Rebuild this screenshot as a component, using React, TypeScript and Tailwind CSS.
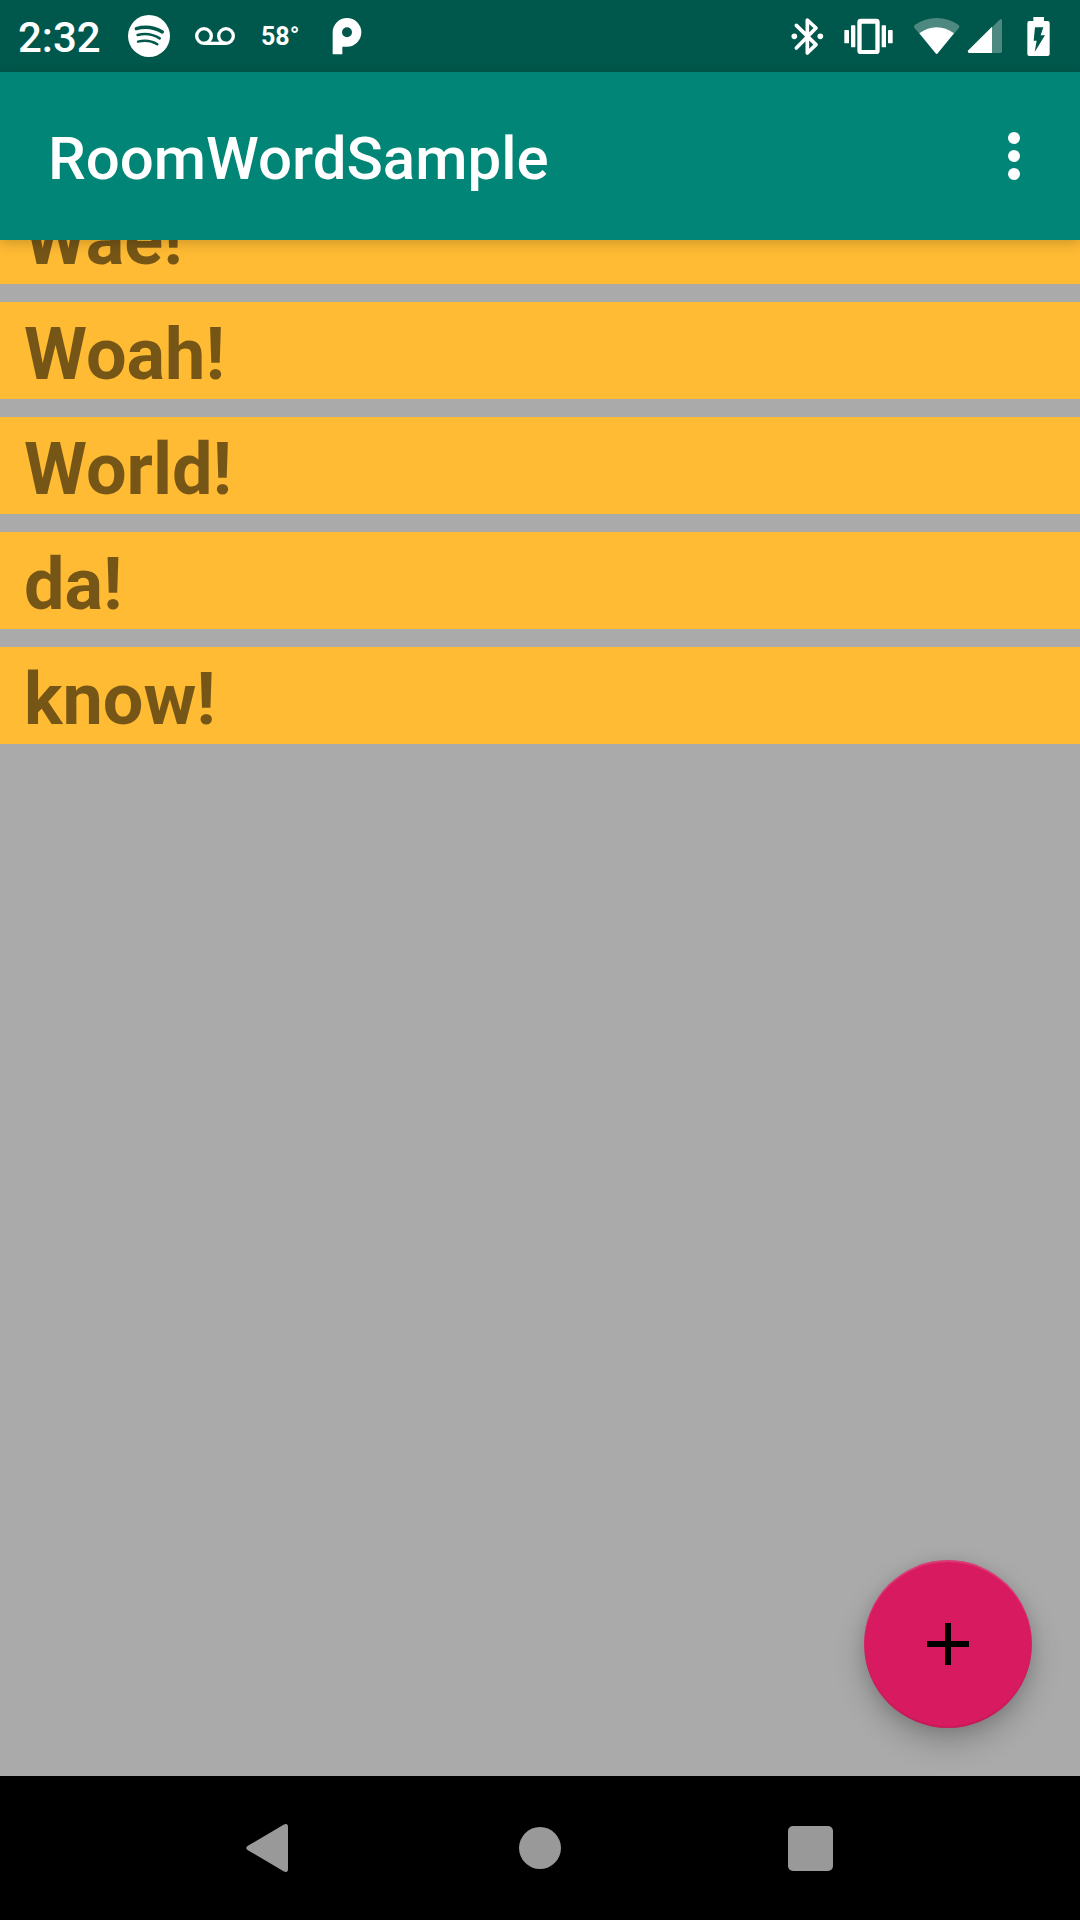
import React from "react";

const words = ["Wae!", "Woah!", "World!", "da!", "know!"];

function SpotifyIcon() {
  return (
    <svg className="size-[42px]" viewBox="0 0 126 126" fill="none" strokeLinecap="round" aria-hidden="true">
      <circle cx="63" cy="63" r="63" fill="#fff" />
      <g stroke="#00574B">
        <path d="M25 41Q66 29 103 51" strokeWidth="10" />
        <path d="M29 60Q64 51 95 70" strokeWidth="8" />
        <path d="M30 80Q62 72 88 88" strokeWidth="7" />
      </g>
    </svg>
  );
}

function VoicemailIcon() {
  return (
    <svg className="h-5 w-[42px]" viewBox="0 0 126 60" fill="none" stroke="#fff" strokeWidth="10" aria-hidden="true">
      <circle cx="30" cy="30" r="22" />
      <circle cx="96" cy="30" r="22" />
      <path d="M30 52H96" />
    </svg>
  );
}

function PodcastIcon() {
  return (
    <svg className="h-[39px] w-[30px]" viewBox="0 0 90 117" fill="#fff" fillRule="evenodd" aria-hidden="true">
      <path d="M2 112V46A43 43 0 1 1 45 89H31V112ZM30 46A15 15 0 1 0 60 46A15 15 0 1 0 30 46Z" />
    </svg>
  );
}

function BluetoothIcon() {
  return (
    <svg className="h-[39px] w-[33px]" viewBox="0 0 99 117" fill="none" aria-hidden="true">
      <circle cx="10" cy="58" r="8.5" fill="#fff" />
      <circle cx="88" cy="58" r="8.5" fill="#fff" />
      <path
        d="M16 25L75 83L49 108V9L75 33L16 93"
        stroke="#fff"
        strokeWidth="11"
        strokeLinecap="round"
        strokeLinejoin="round"
      />
    </svg>
  );
}

function VibrateIcon() {
  return (
    <svg className="h-[37px] w-[49px]" viewBox="0 0 147 111" fill="#fff" aria-hidden="true">
      <rect x="1" y="36" width="14" height="40" rx="2" />
      <rect x="21" y="22" width="13" height="66" rx="2" />
      <path
        fillRule="evenodd"
        d="M50 2H97Q107 2 107 12V98Q107 108 97 108H50Q40 108 40 98V12Q40 2 50 2ZM53 17V96H94V17Z"
      />
      <rect x="113" y="22" width="13" height="66" rx="2" />
      <rect x="132" y="36" width="14" height="40" rx="2" />
    </svg>
  );
}

function WifiIcon() {
  return (
    <svg className="h-[38px] w-[47px]" viewBox="0 0 141 114" fill="#fff" aria-hidden="true">
      <path fillOpacity="0.3" d="M68 109L4 32Q1 27 5 24Q36 3 71 3Q106 3 137 24Q141 27 138 32L74 109Q71 113 68 109Z" />
      <path d="M68 109L19 49Q43 31 71 31Q99 31 123 49L74 109Q71 113 68 109Z" />
    </svg>
  );
}

function SignalIcon() {
  return (
    <svg className="size-9" viewBox="0 0 108 108" fill="#fff" aria-hidden="true">
      <path fillOpacity="0.3" d="M75 28L98 5Q105 0 105 8V100Q105 105 100 105H75Z" />
      <path d="M75 26V105H7Q0 104 4 97Z" />
    </svg>
  );
}

function BatteryIcon() {
  return (
    <svg className="h-[39px] w-[23px]" viewBox="0 0 69 117" fill="#fff" aria-hidden="true">
      <path
        fillRule="evenodd"
        d="M19 0H51V12H62Q68 12 68 18V111Q68 117 62 117H7Q1 117 1 111V18Q1 12 7 12H19ZM24 31L20 71H29L23 105L54 55H41L49 31Z"
      />
    </svg>
  );
}

function StatusBar() {
  return (
    <header className="flex h-[72px] shrink-0 items-center justify-between bg-[#00574B] pr-[30px] pl-[18px] font-medium text-white">
      <div className="flex items-center">
        <span className="w-[110px] pt-1 text-[42px] leading-none">2:32</span>
        <SpotifyIcon />
        <span className="ml-6 flex">
          <VoicemailIcon />
        </span>
        <span className="ml-[25px] w-[71px] text-[25px] leading-none font-bold">58°</span>
        <PodcastIcon />
      </div>
      <div className="flex items-center">
        <BluetoothIcon />
        <span className="ml-5 flex">
          <VibrateIcon />
        </span>
        <span className="ml-5 flex">
          <WifiIcon />
        </span>
        <span className="ml-[7px] flex">
          <SignalIcon />
        </span>
        <span className="ml-6 flex">
          <BatteryIcon />
        </span>
      </div>
    </header>
  );
}

function AppBar() {
  return (
    <div className="relative z-10 flex h-[168px] shrink-0 items-center justify-between bg-[#008577] pr-[30px] pl-12 text-white shadow-[0_4px_12px_rgba(0,0,0,0.18)]">
      <h1 className="pt-1.5 text-[60px] leading-none font-medium">RoomWordSample</h1>
      <button type="button" aria-label="More options" className="size-[72px]">
        <svg viewBox="0 0 24 24" fill="currentColor" aria-hidden="true">
          <circle cx="12" cy="6" r="2" />
          <circle cx="12" cy="12" r="2" />
          <circle cx="12" cy="18" r="2" />
        </svg>
      </button>
    </div>
  );
}

function WordList() {
  return (
    <ul className="-mt-[53px] flex flex-col gap-[18px]">
      {words.map((word) => (
        <li key={word} className="bg-[#FFBB33] px-6 pt-2 text-[72px] leading-[89px] font-bold text-black/54">
          {word}
        </li>
      ))}
    </ul>
  );
}

function NavBar() {
  return (
    <nav className="flex h-36 shrink-0 justify-center bg-black text-[#999999]">
      <div className="grid w-3/4 grid-cols-3">
        <button type="button" aria-label="Back" className="flex items-center justify-center">
          <svg className="size-12" viewBox="0 0 48 48" fill="currentColor" aria-hidden="true">
            <path d="M1.500 22L38 .5Q42-1 42 3V45Q42 49 38 47.500L1.500 26Q-1 24 1.500 22Z" />
          </svg>
        </button>
        <button type="button" aria-label="Home" className="flex items-center justify-center">
          <span className="size-[42px] rounded-full bg-current" />
        </button>
        <button type="button" aria-label="Recent apps" className="flex items-center justify-center">
          <span className="size-[45px] rounded-[5px] bg-current" />
        </button>
      </div>
    </nav>
  );
}

export default function App() {
  return (
    <div className="flex h-screen flex-col bg-[#AAAAAA] font-['Roboto',sans-serif]">
      <StatusBar />
      <AppBar />
      <main className="relative flex-1 overflow-hidden">
        <WordList />
        <button
          type="button"
          aria-label="Add word"
          className="absolute right-12 bottom-12 flex size-[168px] items-center justify-center rounded-full bg-[#D81B60] text-black shadow-[0_14px_30px_rgba(0,0,0,0.22),0_2px_14px_rgba(0,0,0,0.1),inset_0_2px_1px_rgba(255,255,255,0.14),inset_0_-2px_1px_rgba(0,0,0,0.08)]"
        >
          <svg className="size-[42px]" viewBox="0 0 14 14" fill="currentColor" aria-hidden="true">
            <path d="M6 0H8V6H14V8H8V14H6V8H0V6H6Z" />
          </svg>
        </button>
      </main>
      <NavBar />
    </div>
  );
}
